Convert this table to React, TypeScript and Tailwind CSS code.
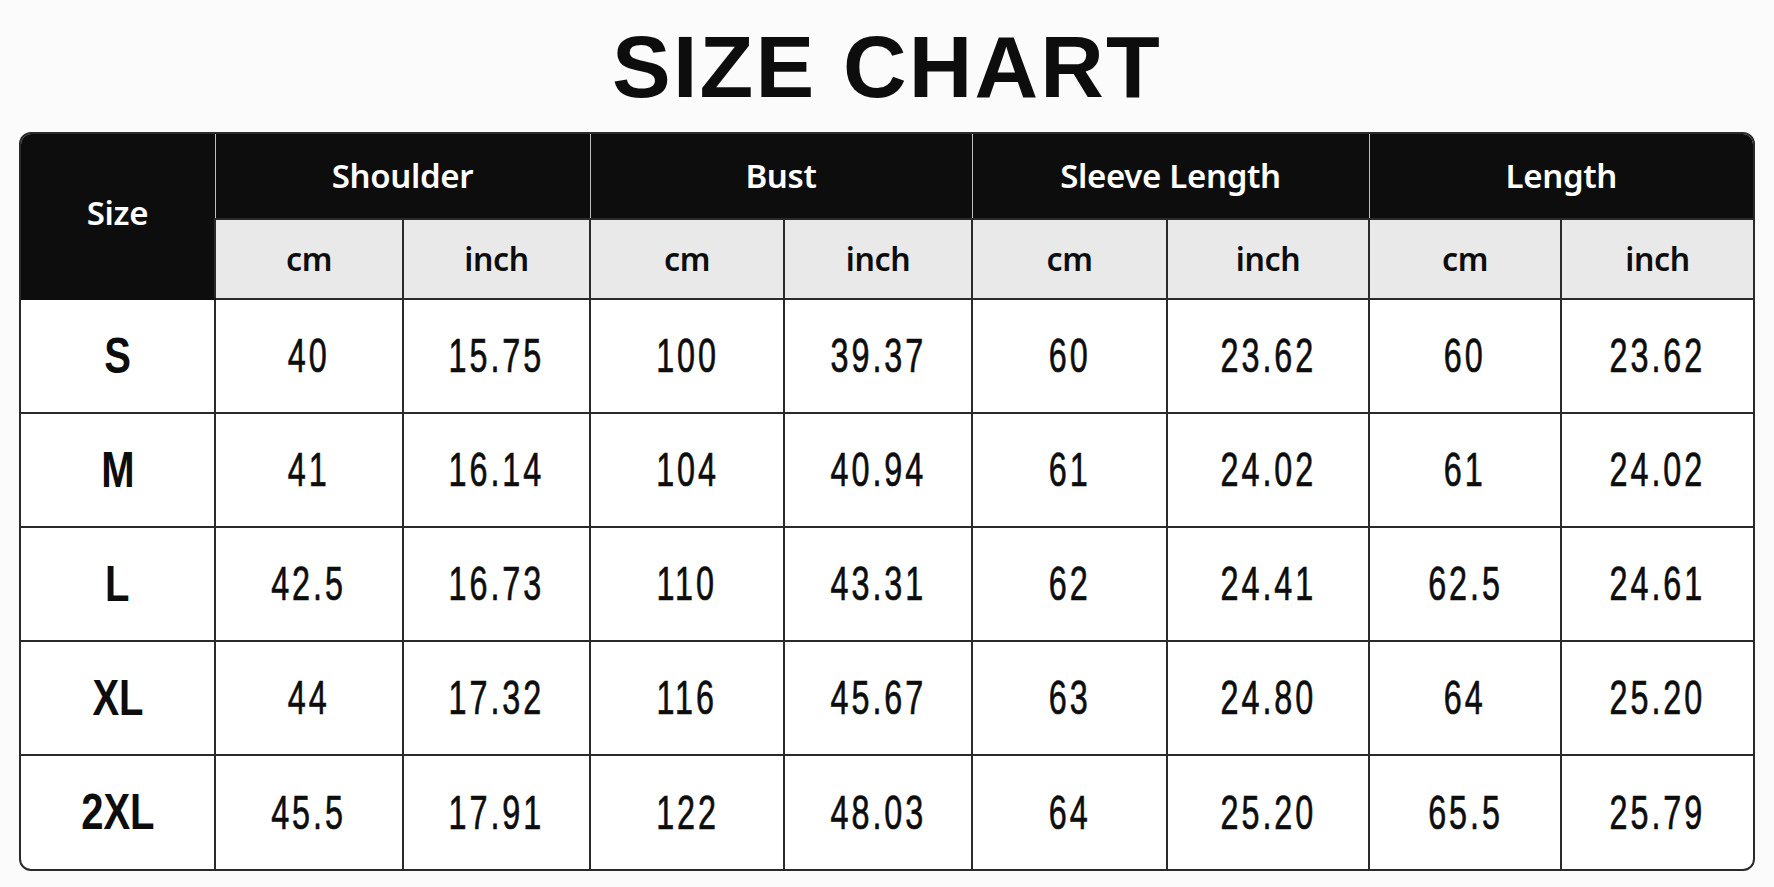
const groups = ["Shoulder", "Bust", "Sleeve Length", "Length"]

const rows = [
  { size: "S", vals: ["40", "15.75", "100", "39.37", "60", "23.62", "60", "23.62"] },
  { size: "M", vals: ["41", "16.14", "104", "40.94", "61", "24.02", "61", "24.02"] },
  { size: "L", vals: ["42.5", "16.73", "110", "43.31", "62", "24.41", "62.5", "24.61"] },
  { size: "XL", vals: ["44", "17.32", "116", "45.67", "63", "24.80", "64", "25.20"] },
  { size: "2XL", vals: ["45.5", "17.91", "122", "48.03", "64", "25.20", "65.5", "25.79"] },
]

const head = "font-['Noto_Sans',sans-serif] font-semibold tracking-[-0.01em]"
const num = "font-['Liberation_Sans',Arial,sans-serif]"

export default function App() {
  return (
    <div className="min-h-[887px] w-full bg-[#fbfbfb] px-[19px] pt-[23px]">
      <h1 className="mb-[21px] text-center font-['Liberation_Sans',Arial,sans-serif] text-[88px] font-bold leading-[88px] tracking-[0.025em] text-[#0d0d0d]">
        SIZE CHART
      </h1>
      <div className="overflow-hidden rounded-[12px] border-2 border-[#2a2a2a] bg-white">
        <table className="w-full table-fixed border-collapse text-center text-[#0d0d0d]">
          <colgroup>
            <col className="w-[194px]" />
            <col className="w-[188px]" />
            <col className="w-[187px]" />
            <col className="w-[194px]" />
            <col className="w-[188px]" />
            <col className="w-[195px]" />
            <col className="w-[202px]" />
            <col className="w-[192px]" />
            <col />
          </colgroup>
          <thead>
            <tr className="h-[85px] bg-[#0d0d0d] text-white">
              <th rowSpan={2} className={`${head} border-b-2 border-[#0d0d0d] pb-[6px] text-[33px]`}>
                Size
              </th>
              {groups.map((g) => (
                <th key={g} colSpan={2} className={`${head} border-l border-[#bdbdbd] text-[33px]`}>
                  {g}
                </th>
              ))}
            </tr>
            <tr className="h-[80px] bg-[#e9e9e9]">
              {groups.map((g) => (
                <>
                  <th key={g + "cm"} className={`${head} border-2 border-[#2a2a2a] text-[32px]`}>
                    cm
                  </th>
                  <th key={g + "in"} className={`${head} border-2 border-r-0 border-[#2a2a2a] text-[32px]`}>
                    inch
                  </th>
                </>
              ))}
            </tr>
          </thead>
          <tbody>
            {rows.map((r, i) => (
              <tr key={r.size} className="h-[114px]">
                <td className={`${num} border-t-2 border-[#2a2a2a] text-[50px] font-bold ${i === 0 ? "border-t-0" : ""}`}>
                  <span className="inline-block scale-x-[0.8]">{r.size}</span>
                </td>
                {r.vals.map((v, j) => (
                  <td key={j} className={`${num} border-2 border-[#2a2a2a] text-[49px] ${j === 7 ? "border-r-0" : ""} ${i === 4 ? "border-b-0" : ""}`}>
                    <span className="inline-block scale-x-[0.66] tracking-[0.09em] [-webkit-text-stroke:0.7px_#0d0d0d]">{v}</span>
                  </td>
                ))}
              </tr>
            ))}
          </tbody>
        </table>
      </div>
    </div>
  )
}
